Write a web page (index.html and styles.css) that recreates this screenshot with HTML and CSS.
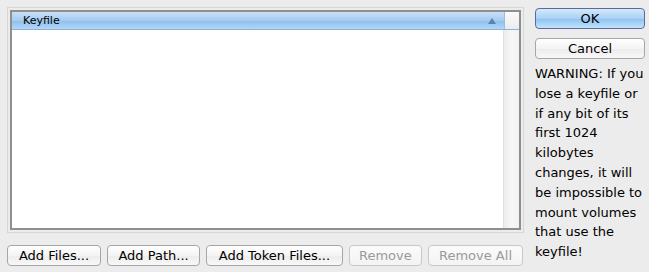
FILE: index.html
```html
<!DOCTYPE html>
<html>
<head>
<meta charset="utf-8">
<link rel="stylesheet" href="styles.css">
</head>
<body>
<div class="dialog">
  <div class="left">
    <div class="listframe">
      <div class="list">
        <div class="header">
          <div class="col">Keyfile<span class="sort"></span></div>
          <div class="corner"></div>
        </div>
        <div class="body">
          <div class="rows"></div>
          <div class="vscroll"></div>
        </div>
      </div>
    </div>
    <div class="buttons">
      <button class="btn w-files">Add Files...</button>
      <button class="btn w-path">Add Path...</button>
      <button class="btn w-token">Add Token Files...</button>
      <button class="btn w-remove" disabled>Remove</button>
      <button class="btn w-removeall" disabled>Remove All</button>
    </div>
  </div>
  <div class="right">
    <button class="btn ok">OK</button>
    <button class="btn cancel">Cancel</button>
    <p class="warning">WARNING: If you lose a keyfile or if any bit of its first 1024 kilobytes changes, it will be impossible to mount volumes that use the keyfile!</p>
  </div>
</div>
</body>
</html>
```
FILE: styles.css
```css
html, body {
  margin: 0;
  padding: 0;
  background: #ececec;
  width: 649px;
  height: 272px;
  overflow: hidden;
  font-family: "DejaVu Sans", "Liberation Sans", sans-serif;
  font-size: 13px;
  color: #000;
}
.dialog {
  display: flex;
  padding: 7px 0 0 7px;
  gap: 10px;
}
.left {
  width: 516px;
  display: flex;
  flex-direction: column;
}
.listframe {
  width: 511px;
  height: 220px;
  border: 1px solid #d6d6d6;
  padding: 2px;
  box-sizing: content-box;
}
.list {
  height: 216px;
  border: 2px solid #8f8f8f;
  background: #fff;
  display: flex;
  flex-direction: column;
}
.header {
  height: 17px;
  display: flex;
  border-bottom: 1px solid #8fb0d6;
}
.header .col {
  flex: 1;
  background: linear-gradient(#c9e0f7, #a4cbf0 50%, #8ebfec 51%, #b1d6f7);
  font-size: 11px;
  line-height: 17px;
  padding-left: 11px;
  position: relative;
  border-right: 1px solid #9bbbe0;
}
.sort {
  position: absolute;
  right: 8px;
  top: 6px;
  width: 0;
  height: 0;
  border-left: 4px solid transparent;
  border-right: 4px solid transparent;
  border-bottom: 6px solid #5a82b4;
}
.header .corner {
  width: 14px;
  background: linear-gradient(#fafafa, #ececec);
}
.body {
  flex: 1;
  display: flex;
}
.rows { flex: 1; }
.vscroll {
  width: 15px;
  background: linear-gradient(90deg, #ececec, #f7f7f7 50%, #f3f3f3);
  border-left: 1px solid #e0e0e0;
}
.buttons {
  display: flex;
  gap: 6px;
  margin-top: 12px;
}
.btn {
  height: 21px;
  border: 1px solid #a6a6a6;
  border-radius: 4px;
  background: linear-gradient(#ffffff, #f4f4f4 50%, #ececec 51%, #f8f8f8);
  font-family: "DejaVu Sans", "Liberation Sans", sans-serif;
  font-size: 13px;
  color: #000;
  padding: 0;
  box-sizing: border-box;
  line-height: 19px;
}
.btn:disabled {
  color: #9a9a9a;
  border-color: #c8c8c8;
  background: linear-gradient(#fbfbfb, #f3f3f3);
}
.w-files { width: 95px; }
.w-path { width: 94px; }
.w-token { width: 138px; }
.w-remove { width: 74px; }
.w-removeall { width: 96px; }
.right {
  width: 110px;
  margin-left: 2px;
  display: flex;
  flex-direction: column;
}
.ok {
  margin-top: 1px;
  width: 110px;
  border-color: #5a6b9c;
  background: linear-gradient(#d4e8fb, #a9d1f5 50%, #8cc1f0 51%, #c2e3fd);
}
.cancel {
  margin-top: 9px;
  width: 110px;
}
.warning {
  margin: 5px 0 0 0;
  font-size: 13px;
  line-height: 19.8px;
}
```
